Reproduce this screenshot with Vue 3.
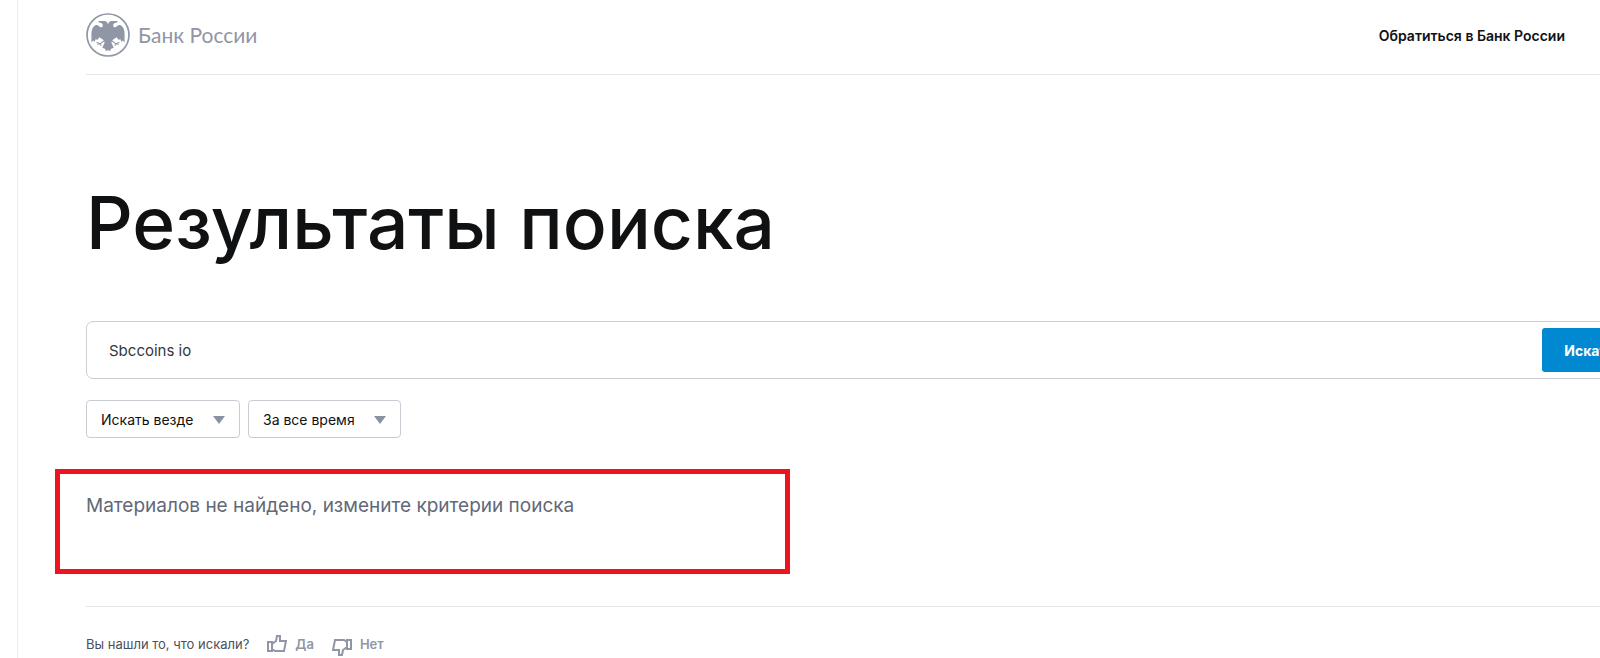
<template>
  <div class="page">
    <header class="header">
      <a class="logo" href="#">
        <svg class="emblem" viewBox="0 0 130 130" aria-hidden="true">
          <circle cx="65" cy="65" r="62" fill="none" stroke="currentColor" stroke-width="5" />
          <path
            fill="currentColor"
            d="M65 35 C64 29 61 25 56 24 L37 24 L37 28 C43 28 46 29 48 32 C51 36 50 41 46 42 C41 43 39 38 34 36 C28 34 22 39 19 46 C16 53 16 60 16 66 L16 87 L21 81 L25 85 L29 77 L34 80 L39 72 L46 76 L52 80 L55 88 L48 103 L57 106 L58 112 L65 110 L72 112 L73 106 L82 103 L75 88 L78 80 L84 76 L91 72 L96 80 L101 77 L105 85 L109 81 L114 87 L114 66 C114 60 114 53 111 46 C108 39 102 34 96 36 C91 38 89 43 84 42 C80 41 79 36 82 32 C84 29 87 28 93 28 L93 24 L74 24 C69 25 66 29 65 35 Z"
          />
          <path
            fill="none"
            stroke="currentColor"
            stroke-width="3"
            d="M54 82 L41 91 L31 86 M41 91 L33 92 M41 91 L45 97 M76 82 L89 91 L99 86 M89 91 L97 92 M89 91 L85 97"
          />
        </svg>
        <span>Банк России</span>
      </a>
      <a class="contact" href="#">Обратиться в Банк России</a>
    </header>

    <main>
      <h1>Результаты поиска</h1>
      <form class="search" @submit.prevent>
        <input v-model="query" type="text" aria-label="Поиск" />
        <button type="submit">Искать</button>
      </form>
      <div class="filters">
        <div v-for="filter in filters" :key="filter.id" class="filter">
          <select :id="filter.id" v-model="filter.value" :aria-label="filter.value">
            <option>{{ filter.value }}</option>
          </select>
          <svg viewBox="0 0 12 8" aria-hidden="true"><path d="M0 0H12L6 8Z" fill="currentColor" /></svg>
        </div>
      </div>
      <p class="empty">Материалов не найдено, измените критерии поиска</p>
    </main>

    <footer class="feedback">
      <span>Вы нашли то, что искали?</span>
      <button type="button" @click="answer = 'yes'">
        <svg viewBox="0 0 20 18" aria-hidden="true"><path :d="thumb" /></svg>
        Да
      </button>
      <button type="button" class="no" @click="answer = 'no'">
        <svg viewBox="0 0 20 18" aria-hidden="true"><path :d="thumb" transform="rotate(180 10 9)" /></svg>
        Нет
      </button>
    </footer>
  </div>
</template>

<script setup>
import { ref } from 'vue'

const query = ref('Sbccoins io')
const answer = ref('')
const filters = ref([
  { id: 'scope', value: 'Искать везде' },
  { id: 'period', value: 'За все время' },
])
const thumb = 'M1 7H5V16H1Z M5 9L9 6L10 1H13V6H19L17 16H8L5 14'
</script>

<style>
body{margin:0;background:#fff}
</style>

<style scoped>
.page{box-sizing:border-box;min-height:100vh;margin-left:17px;padding-left:68px;border-left:1px solid #ececef;overflow:hidden;font-family:Inter,"Liberation Sans",sans-serif;color:#101113}
.header{display:flex;align-items:center;justify-content:space-between;height:74px;padding-right:35px;border-bottom:1px solid #e4e5e7}
.logo{display:flex;align-items:center;gap:8px;margin-bottom:4px;font:21px/44px Lato,"Open Sans",sans-serif;color:#9096a5;text-decoration:none}
.emblem{width:44px;height:44px}
.contact{margin-bottom:4px;font-size:14px;font-weight:600;color:#101113;text-decoration:none}
h1{margin:108px 0 58px;font-size:73px;line-height:80px;font-weight:500}
.search{display:flex;align-items:center;box-sizing:border-box;height:58px;margin-right:-45px;padding:0 7px 0 22px;border:1px solid #cdcfd6;border-radius:7px}
.search input{flex:1;min-width:0;padding:0;border:0;outline:0;background:none;font:15px Inter,sans-serif;color:#35373c}
.search button{height:44px;padding:0 22px;border:0;border-radius:3px;background:#0088d0;font:700 14px Inter,sans-serif;color:#fff}
.filters{display:flex;gap:8px;margin-top:21px}
.filter{position:relative}
.filter select{appearance:none;height:38px;padding:0 45px 0 14px;border:1px solid #c9ccd3;border-radius:4px;background:#fff;font:14px Inter,sans-serif;color:#101113}
.filter svg{position:absolute;top:16px;right:15px;width:12px;height:8px;color:#8b91a1;pointer-events:none}
.empty{box-sizing:border-box;max-width:735px;height:105px;margin:31px 0 32px -31px;padding:20px 26px;border:5px solid #ee1320;font-size:19px;line-height:24px;color:#626877}
.feedback{display:flex;align-items:center;height:50px;padding-top:12px;border-top:1px solid #e4e5e7;font-size:13px;color:#4c505a;overflow:hidden}
.feedback button{display:flex;align-items:center;gap:8px;margin-left:18px;padding:0;border:0;background:none;font:600 13px Inter,sans-serif;color:#9096a5}
.feedback svg{width:20px;height:18px;fill:none;stroke:currentColor;stroke-width:2}
.feedback .no svg{margin-top:6px}
</style>
